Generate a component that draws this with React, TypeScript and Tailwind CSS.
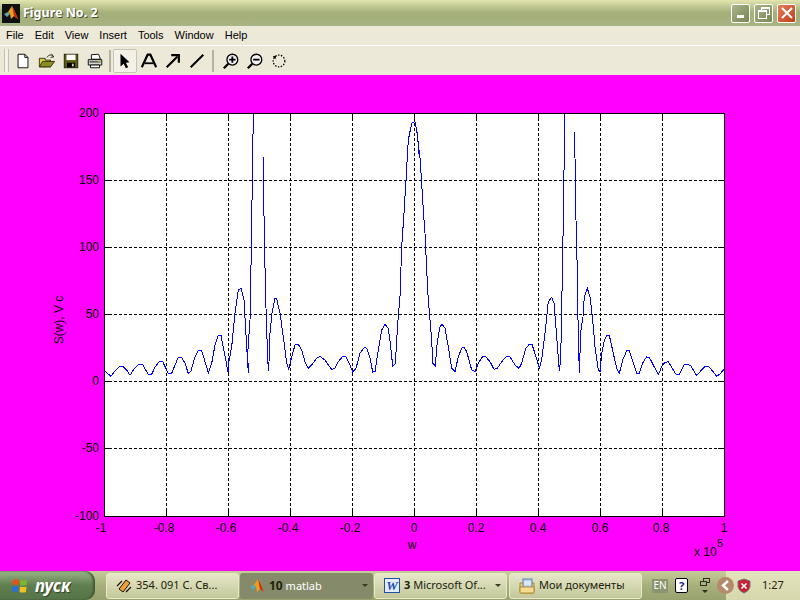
import type { ReactNode } from 'react'

const FONT = "font-['Noto_Sans','Liberation_Sans',sans-serif]"

// curve traced from the figure, in crop coordinates (3x, crop origin given per half)
const LEFT_A = [
  [12, 810], [20, 818], [33, 829], [45, 812], [58, 800], [68, 799], [80, 810], [90, 826], [100, 810], [115, 794], [128, 794],
  [145, 823], [155, 823], [165, 802], [178, 784], [188, 785], [205, 820], [215, 820], [225, 795], [235, 772], [245, 772],
  [255, 790], [265, 820], [272, 815], [285, 770], [295, 751], [305, 752], [325, 818], [335, 790], [345, 735], [355, 706],
  [363, 706], [385, 820], [385, 795], [395, 740], [405, 640], [415, 570], [423, 565], [432, 600], [440, 740], [445, 818],
  [443, 760], [450, 660], [452, 555], [455, 360], [458, 170], [460, 40],
]
const LEFT_B = [
  [490, 172], [491, 290], [494, 465], [498, 625], [503, 780], [506, 812], [510, 700], [516, 640], [525, 595], [530, 597],
  [540, 640], [550, 710], [560, 790], [566, 808], [575, 770], [585, 735], [595, 733], [605, 750], [615, 785], [625, 805],
  [635, 795], [650, 775], [660, 769], [675, 780], [685, 795], [695, 808], [705, 805], [715, 785], [728, 769], [737, 769],
  [750, 795], [758, 816], [768, 805], [780, 760], [793, 742], [800, 745], [810, 775], [818, 816], [825, 815], [835, 750],
  [845, 690], [855, 673], [865, 685], [872, 740], [878, 798], [886, 792], [893, 670], [900, 590], [905, 440], [912, 340],
  [918, 240], [925, 120], [935, 70], [945, 65], [952, 100], [958, 172],
]
const RIGHT_A = [
  [20, 90], [25, 130], [30, 175], [35, 250], [40, 330], [45, 400], [50, 510], [55, 600], [60, 660], [65, 720], [68, 790],
  [76, 798], [82, 725], [90, 680], [97, 673], [105, 685], [115, 740], [125, 805], [135, 815], [145, 770], [155, 745],
  [162, 742], [170, 755], [185, 810], [195, 815], [205, 790], [218, 769], [226, 769], [240, 785], [252, 808], [262, 805],
  [275, 785], [290, 769], [300, 770], [315, 795], [327, 805], [335, 790], [347, 745], [358, 733], [366, 733], [378, 770],
  [388, 805], [395, 780], [405, 700], [415, 605], [425, 592], [432, 610], [440, 710], [448, 812], [452, 780], [455, 625],
  [458, 460], [461, 290], [464, 40],
]
const RIGHT_B = [
  [494, 97], [495, 175], [498, 360], [503, 560], [504, 660], [508, 818], [510, 760], [513, 690], [519, 650], [523, 590],
  [532, 565], [540, 590], [548, 660], [555, 740], [565, 810], [570, 815], [575, 760], [582, 725], [590, 706], [598, 706],
  [610, 760], [620, 805], [628, 820], [638, 780], [650, 752], [658, 752], [670, 790], [680, 820], [688, 820], [700, 785],
  [710, 771], [718, 772], [735, 805], [745, 824], [755, 800], [765, 787], [775, 785], [790, 810], [798, 823], [808, 823],
  [822, 795], [832, 793], [842, 797], [860, 827], [870, 815], [885, 800], [895, 799], [910, 815], [920, 829], [930, 822],
  [942, 808],
]

function toPoints(points: number[][], originX: number): string {
  return points.map(([x, y]) => `${(originX + x / 3).toFixed(1)},${(100 + y / 3).toFixed(1)}`).join(' ')
}

const X_GRID = [166, 228, 290, 352, 414, 476, 538, 600, 662]
const Y_GRID = [180, 247, 314, 381, 448]
const X_LABELS: [string, number][] = [
  ['-1', 101], ['-0.8', 164], ['-0.6', 226], ['-0.4', 288], ['-0.2', 350], ['0', 414],
  ['0.2', 476], ['0.4', 538], ['0.6', 600], ['0.8', 661], ['1', 724],
]
const Y_LABELS: [string, number][] = [
  ['200', 117], ['150', 184], ['100', 251], ['50', 318], ['0', 385], ['-50', 452], ['-100', 520],
]

function Plot() {
  return (
    <svg
      viewBox="0 76 800 495"
      className="block h-[495px] w-[800px] bg-[#ff00ff] font-['Liberation_Sans',sans-serif] text-[12px]"
    >
      <rect x="104.5" y="113.5" width="620" height="403" fill="#ffffff" />
      <g stroke="#000000" strokeDasharray="3 2" shapeRendering="crispEdges">
        {X_GRID.map((x) => (
          <line key={x} x1={x + 0.5} x2={x + 0.5} y1="113" y2="516" />
        ))}
        {Y_GRID.map((y) => (
          <line key={y} x1="104" x2="724" y1={y + 0.5} y2={y + 0.5} />
        ))}
      </g>
      <g stroke="#000000" shapeRendering="crispEdges">
        {X_GRID.map((x) => (
          <g key={x}>
            <line x1={x + 0.5} x2={x + 0.5} y1="113" y2="119" />
            <line x1={x + 0.5} x2={x + 0.5} y1="510" y2="516" />
          </g>
        ))}
        {Y_GRID.map((y) => (
          <g key={y}>
            <line x1="104" x2="110" y1={y + 0.5} y2={y + 0.5} />
            <line x1="718" x2="724" y1={y + 0.5} y2={y + 0.5} />
          </g>
        ))}
      </g>
      <g fill="none" stroke="#0000ff" strokeWidth="1" shapeRendering="crispEdges">
        <polyline points={toPoints(LEFT_A, 100)} />
        <polyline points={toPoints(LEFT_B, 100)} />
        <polyline points={toPoints(RIGHT_A, 410)} />
        <polyline points={toPoints(RIGHT_B, 410)} />
      </g>
      <rect x="104.5" y="113.5" width="620" height="403" fill="none" stroke="#000000" shapeRendering="crispEdges" />
      <g fill="#000000">
        {X_LABELS.map(([label, x]) => (
          <text key={label} x={x} y="532" textAnchor="middle">{label}</text>
        ))}
        {Y_LABELS.map(([label, y]) => (
          <text key={label} x="99" y={y} textAnchor="end">{label}</text>
        ))}
        <text x="412" y="549" textAnchor="middle">w</text>
        <text x="694" y="556">x 10</text>
        <text x="717" y="547" className="text-[11px]">5</text>
        <text x="0" y="0" textAnchor="middle" transform="translate(63 320) rotate(-90)">S(w), V c</text>
      </g>
    </svg>
  )
}

function MatlabLogo({ size }: { size: number }) {
  return (
    <svg width={size} height={size} viewBox="0 0 16 16">
      <path d="M1 9 L5 7 L7 9 L4 12 Z" fill="#5fa8b0" />
      <path d="M5 7 L9 1 L12 7 L15 14 L11 11 L8 14 L7 9 Z" fill="#e8a020" />
      <path d="M9 1 L12 7 L15 14 L11 11 Z" fill="#d02810" />
    </svg>
  )
}

function TitleBar() {
  return (
    <div className="flex h-[26px] items-center bg-gradient-to-b from-[#e2e5ae] via-[#a3ae78] to-[#a8b482] pl-[2px] pr-[4px]">
      <div className="flex h-[19px] w-[18px] items-center justify-center bg-[#101010]">
        <MatlabLogo size={16} />
      </div>
      <span className="ml-[3px] font-['Noto_Sans',sans-serif] text-[12.5px] font-bold text-white [text-shadow:1px_1px_0_#4a5030]">
        Figure No. 2
      </span>
      <div className="ml-auto flex gap-[4px]">
        <button type="button" className="flex h-[19px] w-[19px] items-end justify-center rounded-[2px] border border-white bg-gradient-to-br from-[#a9b48a] to-[#7b8655] pb-[4px]">
          <span className="h-[3px] w-[7px] bg-white" />
        </button>
        <button type="button" className="flex h-[19px] w-[19px] items-center justify-center rounded-[2px] border border-white bg-gradient-to-br from-[#a9b48a] to-[#7b8655]">
          <svg width="12" height="12" viewBox="0 0 12 12" fill="none" stroke="#ffffff" strokeWidth="1" shapeRendering="crispEdges">
            <path d="M3.5 3.5 V0.5 H11.5 V7.5 H8.5" />
            <path d="M3.5 1.5 H11.5" />
            <rect x="0.5" y="3.5" width="8" height="8" />
            <path d="M0.5 4.5 H8.5" />
          </svg>
        </button>
        <button type="button" className="flex h-[19px] w-[19px] items-center justify-center rounded-[2px] border border-white bg-gradient-to-br from-[#e0805a] to-[#c23c14]">
          <svg width="12" height="12" viewBox="0 0 12 12" stroke="#ffffff" strokeWidth="2">
            <path d="M1 1 L11 11 M11 1 L1 11" />
          </svg>
        </button>
      </div>
    </div>
  )
}

function MenuBar() {
  const items = ['File', 'Edit', 'View', 'Insert', 'Tools', 'Window', 'Help']
  return (
    <div className="flex h-[20px] items-center gap-[11px] border-b border-b-white bg-[#ece9d8] pl-[6px] font-['Liberation_Sans',sans-serif] text-[11px] text-black">
      {items.map((item) => (
        <span key={item}>{item}</span>
      ))}
    </div>
  )
}

function ToolIcon({ children, active }: { children: ReactNode; active?: boolean }) {
  return (
    <div className={`flex h-[24px] w-[24px] items-center justify-center ${active ? 'rounded-[2px] border border-[#c8c4b4] bg-[#f4f1e8]' : ''}`}>
      <svg width="18" height="18" viewBox="0 0 20 20">{children}</svg>
    </div>
  )
}

function Separator({ className }: { className: string }) {
  return <div className={`h-[22px] w-[2px] bg-[#b5b2a2] ${className}`} />
}

function MagnifierGlass({ plus }: { plus: boolean }) {
  return (
    <g fill="none" stroke="#000000">
      <circle cx="11.5" cy="8.5" r="6" strokeWidth="1.5" fill="#f4f4f4" />
      <path d="M7 13 L2 18" strokeWidth="2.5" />
      <path d="M8 8.5 H15" strokeWidth="2" />
      {plus && <path d="M11.5 5 V12" strokeWidth="2" />}
    </g>
  )
}

function Toolbar() {
  return (
    <div className="flex h-[29px] items-center bg-[#ece9d8] pl-[4px]">
      <div className="mr-[2px] h-[23px] w-[5px] border-x border-x-[#c4c1b1] bg-[#f4f2e8]" />
      <div className="flex items-center">
        <ToolIcon>
          <path d="M4.5 2.5 H12 L15.5 6 V17.5 H4.5 Z" fill="#ffffff" stroke="#000000" />
          <path d="M12 2.5 V6 H15.5" fill="none" stroke="#000000" />
        </ToolIcon>
        <ToolIcon>
          <path d="M1.5 7 H8 V9 H14 V16.5 H1.5 Z" fill="#d8d040" stroke="#303010" />
          <path d="M1.5 16.5 L5 10.5 H18.5 L14 16.5 Z" fill="#8d8a20" stroke="#303010" />
          <path d="M10 6 Q13 1 17 5 M15 2 L17.5 5.5 L14 6" fill="none" stroke="#202020" />
        </ToolIcon>
        <ToolIcon>
          <rect x="2.5" y="2.5" width="15" height="15" fill="#5c5c10" stroke="#202008" />
          <rect x="5" y="3" width="10" height="6" fill="#ffffff" />
          <rect x="5.5" y="12" width="9" height="5" fill="#000000" />
          <rect x="11" y="13" width="2" height="3" fill="#d0d0c0" />
        </ToolIcon>
        <ToolIcon>
          <path d="M6 3 L14 2.5 L16 8 L6 8 Z" fill="#ffffff" stroke="#000000" />
          <path d="M2.5 8.5 H17.5 V14.5 H2.5 Z" fill="#d8d8d0" stroke="#000000" />
          <path d="M5 14.5 H15 V17.5 H5 Z" fill="#ffffff" stroke="#000000" />
          <path d="M4 11 H16" stroke="#000000" />
          <rect x="13" y="9.5" width="3" height="1" fill="#e0d040" />
        </ToolIcon>
        <Separator className="mx-[2px]" />
        <ToolIcon active>
          <path d="M5 2 L5 16 L8.5 13 L11 18 L13.5 17 L11 12 L15 11.5 Z" fill="#000000" />
        </ToolIcon>
        <ToolIcon>
          <path d="M2 17 L8.5 3 H11.5 L18 17" fill="none" stroke="#000000" strokeWidth="2.4" />
          <path d="M5 12.5 H15" stroke="#000000" strokeWidth="2" />
        </ToolIcon>
        <ToolIcon>
          <path d="M3 17 L15 5" stroke="#000000" strokeWidth="2.4" />
          <path d="M8 3.5 H16.5 V12" fill="none" stroke="#000000" strokeWidth="2.4" />
        </ToolIcon>
        <ToolIcon>
          <path d="M3 17 L17 3" stroke="#000000" strokeWidth="2.2" />
        </ToolIcon>
        <Separator className="ml-[3px] mr-[5px]" />
        <ToolIcon>
          <MagnifierGlass plus />
        </ToolIcon>
        <ToolIcon>
          <MagnifierGlass plus={false} />
        </ToolIcon>
        <ToolIcon>
          <circle cx="10" cy="10" r="6.5" fill="none" stroke="#000000" strokeWidth="1.4" strokeDasharray="1.6 1.6" />
          <path d="M3 5 L7 4 L6 8 Z" fill="#000000" />
        </ToolIcon>
      </div>
    </div>
  )
}

function TaskButton({ icon, active, menu, children }: { icon: ReactNode; active?: boolean; menu?: boolean; children: ReactNode }) {
  return (
    <div
      className={`flex h-[26px] w-[133px] items-center rounded-[3px] pl-[9px] pr-[5px] text-[11px] ${
        active
          ? 'bg-[#858b6a] text-white'
          : 'border border-[#e8e9c8] bg-gradient-to-b from-[#e6e7c8] to-[#c3c89a] text-[#22220c]'
      }`}
    >
      {icon}
      <span className="ml-[4px] min-w-0 flex-1 truncate">{children}</span>
      {menu && <span className="ml-auto h-0 w-0 border-x-[3px] border-t-[3px] border-x-transparent border-t-[#3a3a20]" />}
    </div>
  )
}

function Taskbar() {
  return (
    <div className={`flex h-[29px] items-center bg-gradient-to-b from-[#c6cc98] via-[#a7b07c] to-[#98a26f] ${FONT}`}>
      <div className="mr-[11px] flex h-full w-[95px] items-center rounded-r-[10px] bg-gradient-to-b from-[#9bb488] via-[#5f7f4f] to-[#557448] pl-[11px] shadow-[inset_-2px_0_2px_#3e5a33]">
        <svg width="18" height="18" viewBox="0 0 18 18">
          <path d="M2 3 Q5 1.5 8 3 L7.5 8 Q4.5 7 1.5 8 Z" fill="#e8501c" />
          <path d="M9.5 3 Q12.5 4 16 2.5 L15.5 8 Q12.5 9 9 8 Z" fill="#7cb82c" />
          <path d="M1.5 9.5 Q4.5 8.5 7.5 9.5 L7 15 Q4 14 1 15 Z" fill="#2a70d8" />
          <path d="M9 9.5 Q12.5 10.5 15.5 9.5 L15 15 Q12 16 8.5 15 Z" fill="#f0c020" />
        </svg>
        <span className="ml-[6px] text-[17px] font-bold italic text-white [text-shadow:1px_1px_1px_#2e4426]">пуск</span>
      </div>
      <div className="flex gap-[1px]">
        <TaskButton
          icon={
            <svg width="16" height="16" viewBox="0 0 16 16">
              <path d="M3 11 L10 2 L14 5 L7 14 Z" fill="#f0a030" stroke="#201008" />
              <path d="M1 8 L6 3 M10 14 L15 9" stroke="#201008" strokeWidth="1.2" />
            </svg>
          }
        >
          354. 091 С. Св...
        </TaskButton>
        <TaskButton icon={<MatlabLogo size={16} />} active menu>
          <b className="text-[12px] text-[#22220c]">10</b> matlab
        </TaskButton>
        <TaskButton
          icon={
            <span className="flex h-[15px] w-[16px] items-center justify-center border border-[#2050a0] bg-[#e4ecf8] font-['Liberation_Serif',serif] text-[13px] font-bold italic leading-none text-[#2050b0]">
              W
            </span>
          }
          menu
        >
          <b>3</b> Microsoft Of...
        </TaskButton>
        <div className="ml-[1px]">
          <TaskButton
            icon={
              <svg width="16" height="16" viewBox="0 0 16 16">
                <path d="M1 5 H15 V14 Q15 15 14 15 H2 Q1 15 1 14 Z" fill="#f0d070" stroke="#b08a30" />
                <rect x="4" y="1" width="9" height="10" fill="#b8d0f0" stroke="#6080b0" />
                <path d="M5 4 H12 M5 6 H12" stroke="#ffffff" />
                <path d="M1 9 H15 V14 Q15 15 14 15 H2 Q1 15 1 14 Z" fill="#f4dc90" stroke="#b08a30" />
              </svg>
            }
          >
            Мои документы
          </TaskButton>
        </div>
      </div>
      <div className="ml-[10px] flex h-[14px] w-[16px] items-center justify-center bg-[#8a9570] text-[10px] text-white">EN</div>
      <div className="ml-[7px] flex h-[15px] w-[13px] items-center justify-center rounded-[2px] border border-black bg-white text-[11px] font-bold leading-none text-[#20208c]">?</div>
      <div className="ml-[12px] flex w-[10px] flex-col items-center gap-[4px]">
        <svg width="10" height="8" viewBox="0 0 10 8" fill="none" stroke="#303020" shapeRendering="crispEdges">
          <rect x="3.5" y="0.5" width="6" height="4" />
          <rect x="0.5" y="3.5" width="6" height="4" fill="#a7b07c" />
        </svg>
        <span className="h-0 w-0 border-x-[3px] border-t-[3px] border-x-transparent border-t-[#303020]" />
      </div>
      <div className="relative ml-auto flex h-full w-[74px] items-center bg-gradient-to-b from-[#e2e2bc] to-[#d8d8ae] pl-[11px]">
        <div className="absolute left-[-9px] top-[6px] flex h-[17px] w-[17px] items-center justify-center rounded-full bg-[#b58a6a]">
          <svg width="9" height="11" viewBox="0 0 9 11" fill="none" stroke="#ffffff" strokeWidth="2.4">
            <path d="M7 1 L2 5.5 L7 10" />
          </svg>
        </div>
        <svg width="14" height="16" viewBox="0 0 14 16">
          <path d="M7 1 L13 3 V9 Q12 13 7 15 Q2 13 1 9 V3 Z" fill="#c82030" stroke="#707880" />
          <path d="M4.5 5.5 L9.5 10.5 M9.5 5.5 L4.5 10.5" stroke="#ffffff" strokeWidth="1.6" />
        </svg>
        <span className="ml-[11px] text-[11px] text-[#22220c]">1:27</span>
      </div>
    </div>
  )
}

export default function App() {
  return (
    <div className="flex h-[600px] w-[800px] flex-col overflow-hidden">
      <TitleBar />
      <MenuBar />
      <Toolbar />
      <div className="h-[1px] bg-[#ff00ff]" />
      <Plot />
      <Taskbar />
    </div>
  )
}
